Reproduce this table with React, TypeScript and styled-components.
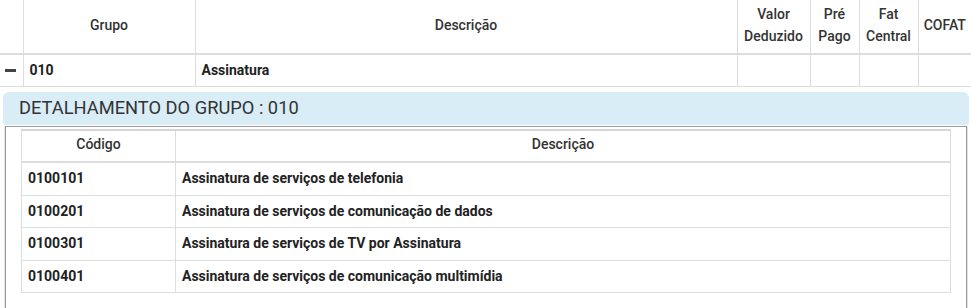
import styled, { createGlobalStyle } from "styled-components";

const GlobalStyle = createGlobalStyle`
  body {
    margin: 0;
    background: #fff;
    font-family: Roboto, "Liberation Sans", sans-serif;
    color: #333;
  }
`;

const groups = [{ code: "010", name: "Assinatura" }];

const details = [
  { code: "0100101", name: "Assinatura de serviços de telefonia" },
  { code: "0100201", name: "Assinatura de serviços de comunicação de dados" },
  { code: "0100301", name: "Assinatura de serviços de TV por Assinatura" },
  { code: "0100401", name: "Assinatura de serviços de comunicação multimídia" },
];

const topCols = [23, 172, 542, 73, 49, 59, 53];

export default function App() {
  return (
    <>
      <GlobalStyle />
      <GroupTable>
        <colgroup>
          {topCols.map((w, i) => (
            <col key={i} style={{ width: w }} />
          ))}
        </colgroup>
        <thead>
          <tr>
            <HeadCell />
            <HeadCell>Grupo</HeadCell>
            <HeadCell>Descrição</HeadCell>
            <HeadCell>
              Valor
              <br />
              Deduzido
            </HeadCell>
            <HeadCell>
              Pré
              <br />
              Pago
            </HeadCell>
            <HeadCell>
              Fat
              <br />
              Central
            </HeadCell>
            <HeadCell $last>COFAT</HeadCell>
          </tr>
        </thead>
        <tbody>
          {groups.map((g) => (
            <tr key={g.code}>
              <ToggleCell>
                <MinusBar />
              </ToggleCell>
              <BodyCell>{g.code}</BodyCell>
              <BodyCell>{g.name}</BodyCell>
              <BodyCell />
              <BodyCell />
              <BodyCell />
              <BodyCell $last />
            </tr>
          ))}
        </tbody>
      </GroupTable>

      <DetailSection>
        <DetailHeading>DETALHAMENTO DO GRUPO : 010</DetailHeading>
        <DetailBox>
          <DetailTable>
            <colgroup>
              <col style={{ width: 154 }} />
              <col />
            </colgroup>
            <thead>
              <tr>
                <DetailHead>Código</DetailHead>
                <DetailHead>Descrição</DetailHead>
              </tr>
            </thead>
            <tbody>
              {details.map((d) => (
                <tr key={d.code}>
                  <DetailCell>{d.code}</DetailCell>
                  <DetailCell>{d.name}</DetailCell>
                </tr>
              ))}
            </tbody>
          </DetailTable>
        </DetailBox>
      </DetailSection>
    </>
  );
}

const GroupTable = styled.table`
  width: 971px;
  table-layout: fixed;
  border-collapse: collapse;
  font-size: 14px;
`;

const HeadCell = styled.th<{ $last?: boolean }>`
  height: 49px;
  padding: 0 4px 4px;
  font-weight: 500;
  line-height: 22px;
  color: #333;
  text-align: center;
  vertical-align: middle;
  border-bottom: 2px solid #ddd;
  border-right: ${(p) => (p.$last ? "none" : "1px solid #ddd")};
`;

const BodyCell = styled.td<{ $last?: boolean }>`
  height: 30px;
  padding: 0 6px 1px;
  font-weight: 700;
  color: #222;
  vertical-align: middle;
  border-bottom: 1px solid #ddd;
  border-right: ${(p) => (p.$last ? "none" : "1px solid #ddd")};
`;

const ToggleCell = styled(BodyCell)`
  padding: 0 0 1px 5px;
`;

const MinusBar = styled.span`
  display: block;
  width: 11px;
  height: 3px;
  background: #444;
`;

const DetailSection = styled.div`
  margin: 5px 2px 0 3px;
  display: flex;
  flex-direction: column;
`;

const DetailHeading = styled.div`
  height: 33px;
  display: flex;
  align-items: center;
  padding: 0 0 2px 16px;
  box-sizing: border-box;
  background: #d9edf7;
  border-radius: 6px 6px 3px 3px;
  font-size: 18.3px;
  color: #333;
`;

const DetailBox = styled.div`
  margin: 1px 2px 0 2px;
  padding: 2px 15px 15px 15px;
  border: 1px solid #9a9a9a;
  border-bottom: none;
  box-shadow: -1px 0 0 #e2e2e2, 1px 0 0 #e2e2e2;
`;

const DetailTable = styled.table`
  width: 930px;
  table-layout: fixed;
  border-collapse: collapse;
  font-size: 14px;
  border: 1px solid #ddd;
  border-top: 2px solid #d6d6d6;
`;

const DetailHead = styled.th`
  height: 25px;
  padding: 0 6px 5px;
  font-weight: 500;
  color: #333;
  text-align: center;
  vertical-align: middle;
  border-bottom: 2px solid #ddd;
  border-right: 1px solid #ddd;
`;

const DetailCell = styled.td`
  height: 30.6px;
  padding: 0 6px 1px;
  font-weight: 700;
  color: #222;
  vertical-align: middle;
  border-bottom: 1px solid #ddd;
  border-right: 1px solid #ddd;
`;
